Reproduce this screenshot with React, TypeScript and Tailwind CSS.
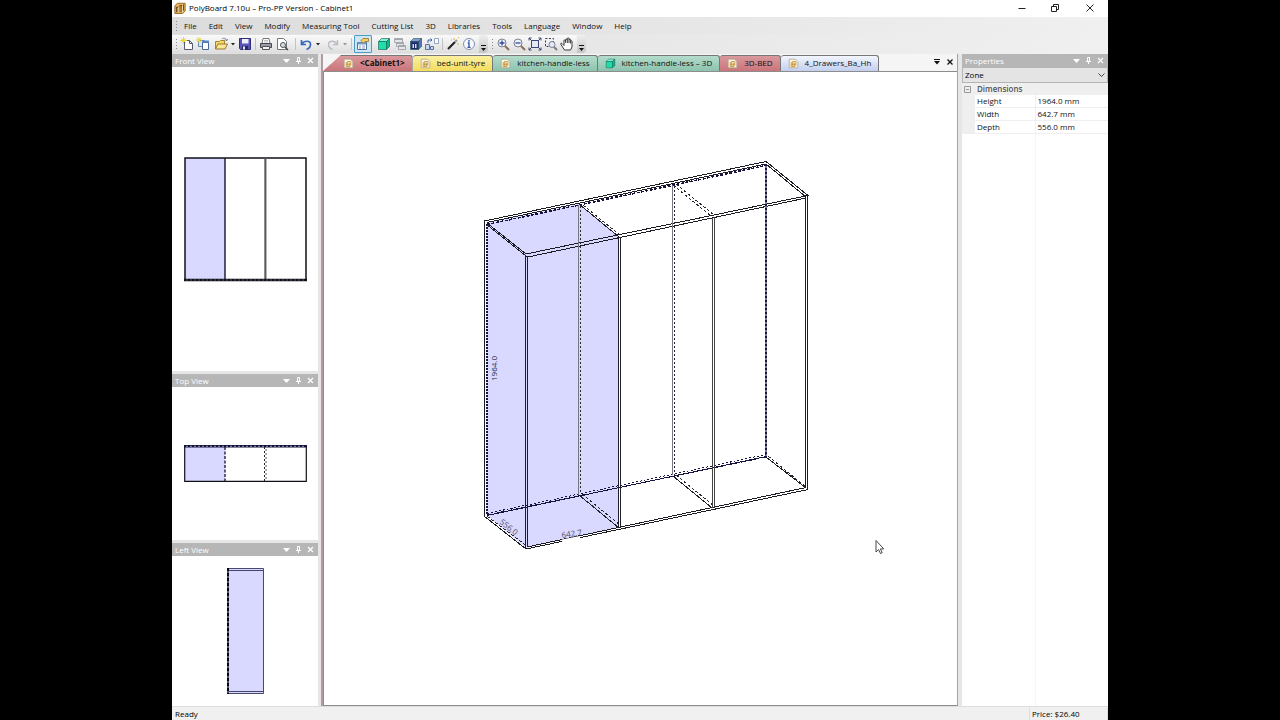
import React, { useState } from 'react'

const menus = ["File", "Edit", "View", "Modify", "Measuring Tool", "Cutting List", "3D", "Libraries", "Tools", "Language", "Window", "Help"];

const tabs = [
    { name: "<Cabinet1>", icon: "doc", style: "bg-linear-to-b from-[#d9999d] to-[#c9747b] pl-5 pr-[7px] font-bold [clip-path:polygon(18px_0,100%_0,100%_100%,0_100%)]" },
    { name: "bed-unit-tyre", icon: "doc", style: "bg-linear-to-b from-[#fbf0a0] to-[#f3dc5c] px-[7px]" },
    { name: "kitchen-handle-less", icon: "doc", style: "bg-linear-to-b from-[#b4dccb] to-[#8cc3ae] px-[7px]" },
    { name: "kitchen-handle-less – 3D", icon: "cube", style: "bg-linear-to-b from-[#b4dccb] to-[#8cc3ae] px-[7px]" },
    { name: "3D-BED", icon: "doc", style: "bg-linear-to-b from-[#d9999d] to-[#c9747b] px-[7px]" },
    { name: "4_Drawers_Ba_Hh", icon: "doc", style: "bg-linear-to-b from-[#f3f6fd] to-[#c3cff0] px-[7px]" },
];

const dimensions = [
    { name: "Height", value: "1964.0 mm" },
    { name: "Width", value: "642.7 mm" },
    { name: "Depth", value: "556.0 mm" },
];

const Svg = ({ size = 14, children }: { size?: number, children: React.ReactNode }) => (
    <svg width={size} height={size} viewBox="0 0 14 14" fill="none" className="shrink-0" aria-hidden="true">{children}</svg>
);

const Cube = ({ face, top, side }: { face: string, top: string, side: string }) => (
    <>
        <path d="M1.5 4.5 4.5 1.5h8l-3 3z" fill={top} stroke="#155" strokeWidth=".6" />
        <path d="m9.5 4.5 3-3v8l-3 3z" fill={side} stroke="#155" strokeWidth=".6" />
        <path d="M1.5 4.5h8v8h-8z" fill={face} stroke="#155" strokeWidth=".6" />
    </>
);

const icons: Record<string, React.ReactNode> = {
    logo: <>
        <path d="M1 4.5 4 1.5h9v9l-3 3H1z" fill="#e8b65a" stroke="#8a5a14" />
        <path d="M3 12V6h2v6M7 12V4h2v8M11 10V3" stroke="#75480c" strokeWidth="1.2" />
        <path d="M5.5 6v6M9.7 4v8" stroke="#fff3cf" />
    </>,
    doc: <>
        <path d="M1.5 1.5h8l3 3v8h-11z" fill="#fbf6e6" stroke="#b0a58a" />
        <path d="m4 6 2-1.500h4v5L8 11H4zM6 5v6M8 6v5M4 8h6" stroke="#c49335" strokeWidth="1.1" />
    </>,
    cube: <Cube face="#1fe0a4" top="#7df5d0" side="#10b585" />,
    fresh: <>
        <path d="M4.500 3.500h5l3 3v6h-8z" fill="#fff" stroke="#555c70" />
        <path d="M9.500 3.500v3h3" stroke="#555c70" />
        <path d="M3.500 0v7M0 3.500h7M1 1l5 5M6 1 1 6" stroke="#e6d84d" />
    </>,
    copies: <>
        <path d="M2.500 3.500h6v6h-6z" fill="#dce8fa" stroke="#6685b5" />
        <path d="M6.500 5.500h6v7h-6z" fill="#fff" stroke="#46669b" />
        <path d="M6 4.500h7" stroke="#5a88cc" strokeWidth="2" />
        <path d="M3 0v6M0 3h6M1 1l4 4M5 1 1 5" stroke="#e6d84d" />
    </>,
    open: <>
        <path d="M1.500 12V4.500h4l1-1h4V7" fill="#f5d76c" stroke="#a6842a" />
        <path d="M1.500 12 4 7h9.500L11 12z" fill="#fbe896" stroke="#98772a" />
        <path d="M8 2c2-1.500 4-1 4.500 1.500m-1.500-1 1.500 1.500L14 2" stroke="#53708e" strokeWidth=".8" />
    </>,
    save: <>
        <path d="M1.500 1.500h11v11h-10l-1-1z" fill="#5754b5" stroke="#302d80" />
        <path d="M4 2h6.500v4.500H4z" fill="#eef0fb" />
        <path d="M4 9h6v3.500H4z" fill="#292868" />
        <path d="M5 9.500h2v3H5z" fill="#e7e7f7" />
    </>,
    print: <>
        <path d="M4 1.500h6l1 5H3z" fill="#fff" stroke="#777" />
        <path d="M1.500 6.500h11v4h-11z" fill="#9a9ca5" stroke="#444752" />
        <path d="M3.500 9.500h7v3h-7z" fill="#f5f5f5" stroke="#555" />
        <path d="M5 3.500h4M5 5h4" stroke="#999" strokeWidth=".6" />
    </>,
    preview: <>
        <path d="M2.500 1.500h6l3 3v8h-9z" fill="#fff" stroke="#777" />
        <circle cx="8" cy="8" r="2.500" fill="#cfe0ec" stroke="#555" />
        <path d="m10 10 3 3" stroke="#444" strokeWidth="1.500" />
    </>,
    undo: <path d="M2.500 3v4.500H7M3 7c2-3.500 8.500-4 8.500.5 0 2.500-1.500 4-4 5" stroke="#3967bd" strokeWidth="1.700" />,
    redo: <path d="M11.500 3v4.500H7M11 7C9 3.500 2.500 3 2.500 7.500c0 2.500 1.500 4 4 5" stroke="#b9bcc2" strokeWidth="1.400" />,
    props: <>
        <path d="M1.500 5.500h9v7h-9z" fill="#fff" stroke="#5374a0" />
        <path d="M2 6.500h8" stroke="#6da1da" strokeWidth="2" />
        <path d="M3 9h2M6 9h3M3 11h2M6 11h3" stroke="#6b84a5" strokeWidth=".8" />
        <path d="M5 3.500 7 1.500h5.500v3H9l-2 2z" fill="#f4cd68" stroke="#9a7326" strokeWidth=".8" />
    </>,
    layers: <>
        <path d="M1.500 1.500h8v4h-8zM3.500 5.500h7v4h-7zM5.500 8.500h7v4h-7z" fill="#e6e7e9" stroke="#a5a8ac" />
        <path d="M1.500 2.500h8M3.500 6.500h7M5.500 9.500h7" stroke="#a5a8ac" />
    </>,
    box: <>
        <Cube face="#30368e" top="#8f9bd0" side="#616dbb" />
        <path d="M3 6.500h5v5H3z" fill="#d7dcf5" stroke="#1d2266" />
        <path d="M5.500 6.500v5" stroke="#1d2266" />
    </>,
    parts: <>
        <path d="M.5 7.500h4v5h-4zM5.500 9.500h3v3h-3z" fill="#cbd9ee" stroke="#5873a3" />
        <path d="M9.500 1.500h4v5h-4z" fill="#fff" stroke="#8fa4c6" />
        <path d="M3 6V3h4M5.500 1.500 7 3 5.500 4.500" stroke="#42639f" />
    </>,
    wand: <>
        <path d="m2 12 7-7" stroke="#222" strokeWidth="2.200" />
        <path d="m9 5 2-2" stroke="#999" strokeWidth="2.200" />
        <path d="M8 1v2M12 6v2M12 1l1-1M5 3h1" stroke="#d8b52d" />
    </>,
    info: <>
        <circle cx="7" cy="7" r="5.500" fill="#f7f9fe" stroke="#8390ad" />
        <path d="M7 3v1.700M5.800 6H7v4M5.500 10.300h3" stroke="#3451a3" strokeWidth="1.300" />
    </>,
    zoomin: <>
        <circle cx="6" cy="6" r="4" fill="#edf2fb" stroke="#7c8294" />
        <path d="M6 3.500v5M3.500 6h5" stroke="#3346a0" strokeWidth="1.300" />
        <path d="m9 9 4 4" stroke="#8b6d55" strokeWidth="2" />
    </>,
    zoomout: <>
        <circle cx="6" cy="6" r="4" fill="#edf2fb" stroke="#7c8294" />
        <path d="M3.500 6h5" stroke="#3346a0" strokeWidth="1.300" />
        <path d="m9 9 4 4" stroke="#8b6d55" strokeWidth="2" />
    </>,
    extents: <>
        <path d="M3.500 3.500h7v7h-7z" fill="#e2e8f5" stroke="#3c4675" />
        <path d="M1 3.500V1h2.500M10.500 1H13v2.500M13 10.500V13h-2.500M3.500 13H1v-2.500M1 1l3 3M13 1l-3 3M1 13l3-3M13 13l-3-3" stroke="#3c4675" />
    </>,
    zoomwin: <>
        <path d="M1.500 1.500h8v8h-8z" stroke="#333d60" strokeDasharray="2 1.500" />
        <circle cx="8" cy="7.500" r="3" fill="#e4ebf7" stroke="#777e8e" />
        <path d="m10 10 3 3" stroke="#777" strokeWidth="1.800" />
    </>,
    hand: <path d="M4 8.500 2 6.500c-1-.8-1.800.3-1 1.200L4.500 13h6l1.500-3V4.500c0-1-1.400-1-1.400 0V2.800c0-1-1.600-1-1.600 0V1.600c0-1-1.700-1-1.700 0v1.200c0-1-1.700-1-1.700 0v3M7.300 2.800V6M9 2.800V6M10.600 4.500v2M4 8.500V3.600c0-1 1.600-1 1.600 0" fill="#fff" stroke="#222" strokeWidth=".9" />,
};

const Tool = ({ name, label }: { name: string, label: string }) => (
    <button type="button" aria-label={label} className="flex h-4 w-4 items-center justify-center">
        <Svg size={14}>{icons[name]}</Svg>
    </button>
);

const Drop = ({ label, color = "#222" }: { label: string, color?: string }) => (
    <button type="button" aria-label={label} className="flex h-4 w-2 items-center justify-center">
        <svg width="4" height="3" viewBox="0 0 4 3"><path d="M0 0h4L2 2.500z" fill={color} /></svg>
    </button>
);

const Sep = () => <span className="mx-[2px] h-3 w-px bg-[#c3c3c3]" />;

const Grip = () => (
    <svg width="6" height="12" viewBox="0 0 6 12" className="shrink-0" aria-hidden="true">
        <path d="M3.500 1v11" stroke="#8c8c8c" strokeDasharray="1 2" />
    </svg>
);

const Overflow = ({ label }: { label: string }) => (
    <button type="button" aria-label={label} className="flex h-[18px] w-[9px] items-end justify-center rounded-r-sm bg-linear-to-b from-[#efefef] to-[#c4c4c4] pb-[2px]">
        <svg width="5" height="6" viewBox="0 0 5 6"><path d="M0 .5h5" stroke="#111" /><path d="M0 3h5L2.500 6z" fill="#111" /></svg>
    </button>
);

const PanelHeader = ({ title }: { title: string }) => (
    <div className="flex h-[13px] shrink-0 items-center bg-[#b6b6b6] px-[2px] text-white">
        <h2 className="flex-1 pl-px">{title}</h2>
        <button type="button" aria-label={title + " menu"} className="flex w-3 justify-center">
            <svg width="7" height="4" viewBox="0 0 7 4"><path d="M0 0h7L3.500 4z" fill="#fff" /></svg>
        </button>
        <button type="button" aria-label={"Pin " + title} className="flex w-3 justify-center">
            <svg width="5" height="7" viewBox="0 0 5 7" fill="none"><path d="M1.500 4V.5h2V4M3.500.5V4M0 4.500h5M2.500 5v2" stroke="#fff" /></svg>
        </button>
        <button type="button" aria-label={"Close " + title} className="flex w-3 justify-center">
            <svg width="7" height="7" viewBox="0 0 7 7"><path d="m1 1 5 5M6 1 1 6" stroke="#fff" strokeWidth="1.200" /></svg>
        </button>
    </div>
);

const FrontView = () => (
    <svg width="123" height="125" viewBox="0 0 123 125" fill="none">
        <path d="M1 1h40v121H1z" fill="#d9d8ff" />
        <path d="M1 124V1h121v123" stroke="#101018" strokeWidth="1.500" />
        <path d="M41 1v122" stroke="#15152c" strokeWidth="1.400" />
        <path d="M81.500 1v122" stroke="#6b6b6b" strokeWidth="2" />
        <path d="M81 1v122" stroke="#333" strokeWidth=".6" />
        <path d="M0 123h123" stroke="#101018" strokeWidth="2.500" />
        <path d="M2 123h119" stroke="#8888a5" strokeWidth=".6" strokeDasharray="2 2" />
    </svg>
);

const TopView = () => (
    <svg width="123" height="37" viewBox="0 0 123 37" fill="none">
        <path d="M1 1h40v35H1z" fill="#d9d8ff" />
        <path d="M.7 1v35.300h121.600V1" stroke="#101018" strokeWidth="1.200" />
        <path d="M0 1.200h123" stroke="#11113a" strokeWidth="2.400" />
        <path d="M2 1.300h120" stroke="#b8b8d8" strokeWidth=".8" strokeDasharray="2 2" />
        <path d="M41 2v34" stroke="#15152c" strokeWidth="1.300" strokeDasharray="3 1.500" />
        <path d="M80.500 2v34" stroke="#222" strokeDasharray="2 2" />
        <path d="M82 4v32" stroke="#555" strokeDasharray="2 2" />
    </svg>
);

const LeftView = () => (
    <svg width="37" height="126" viewBox="0 0 37 126" fill="none">
        <path d="M1 1h35v124H1z" fill="#d9d8ff" />
        <path d="M1 .5h35.500v125H1M1 2.500h35M1 123.500h35" stroke="#34345c" strokeWidth=".9" />
        <path d="M1 0v126" stroke="#55557a" strokeWidth="2" />
        <path d="M1 0v126" stroke="#050510" strokeWidth="2" strokeDasharray="3 2" />
    </svg>
);

const Cabinet = () => (
    <svg viewBox="0 0 633 633" className="h-full w-full" fill="none" role="img" aria-label="Cabinet1">
        <g transform="translate(-324 -72)">
            <path d="m487 223 92-19 40 33v290l-93 21-39-33z" fill="#d9d8ff" />
            <g shapeRendering="crispEdges">
                {/* outer carcass */}
                <g stroke="#1c1c22">
                    <path d="M484.500 221 766 161.500l42 34L526 254l-39-31" />
                    <path d="m487 222.500 279-58.500 40 33M528 257l278-59M486 224l40 32 2 1" />
                    <path d="M525.500 256v293M527.500 257v290M805.500 197v291M807.500 195v295M484.500 221v295" />
                    <path d="m484 516 42 33 282-59.500M527 547l279-59.500" />
                    <path d="m766 457 40 31" />
                </g>
                {/* back panel */}
                <g stroke="#15153f">
                    <path d="m487 224.500 279-59" strokeWidth="1.600" strokeDasharray="3 1.500" />
                    <path d="M486.500 224v291" strokeWidth="2" strokeDasharray="2 1" />
                    <path d="M765.500 164v293" stroke="#777799" strokeWidth="2" />
                    <path d="M765.500 164v293" strokeWidth="2" strokeDasharray="2 2" />
                    <path d="m487 513.500 279-59" strokeDasharray="2 2" />
                    <path d="m487 515.500 279-59" />
                    <path d="m487 515 279-58" strokeDasharray="5 2" />
                </g>
                <g stroke="#25252d" strokeDasharray="3 2">
                    <path d="m487 516 41 31M768 456l39 32M583 205l38 31M582 494l39 32M673 185l39 32M676 184l38 31M676 475l38 31" />
                    <path d="M580.500 206v288M674.500 186v289" strokeDasharray="2 2" />
                </g>
                {/* partitions */}
                <path d="M578.500 205v290M672.500 185v290" stroke="#77777f" />
                <path d="m579 204 40 33M579 495l40 33M673 476l39 32M618.500 237v291M620.500 237v290" stroke="#20202b" />
                <path d="M712.500 218v290M714.500 217v290" stroke="#444" />
            </g>
            <path d="m562 541 18-3.500" stroke="#fff" strokeWidth="3" />
            <g fill="#50506f" className="text-[8px]">
                <text transform="translate(497 381) rotate(-90)" fill="#22223a">1964.0</text>
                <text transform="translate(499 523) rotate(38)">556.0</text>
                <text transform="translate(562 538) rotate(-8)">642.7</text>
            </g>
            <path d="M876 540.500v11.500l2.600-2.400 1.900 3.900 1.700-.8-1.800-3.800h3.400z" fill="#fff" stroke="#333" strokeWidth=".9" />
        </g>
    </svg>
);

const App = () => {

    const [active, setActive] = useState("<Cabinet1>");
    const [type, setType] = useState("Zone");

  return (
    <div className="h-screen bg-black px-[172px] font-['Open_Sans',sans-serif] text-[8px] font-medium leading-[12px] text-[#111]">
      <div className="flex h-full flex-col bg-[#e6e6e6]">
        <header className="flex h-[17px] shrink-0 items-center bg-white pb-px pl-[2px]">
            <Svg size={12}>{icons.logo}</Svg>
            <h1 className="flex-1 pl-[3px] text-black">PolyBoard 7.10u – Pro-PP Version - Cabinet1</h1>
            <button type="button" aria-label="Minimize" className="flex w-[33px] justify-center">
                <svg width="8" height="8" viewBox="0 0 8 8"><path d="M.5 4.500h7" stroke="#222" /></svg>
            </button>
            <button type="button" aria-label="Restore" className="flex w-[33px] justify-center">
                <svg width="8" height="8" viewBox="0 0 8 8" fill="none"><path d="M.5 2.500h5v5h-5zM2.500 2V.5h5v5H6" stroke="#222" /></svg>
            </button>
            <button type="button" aria-label="Close" className="flex w-[37px] justify-center">
                <svg width="8" height="8" viewBox="0 0 8 8"><path d="m.5.5 7 7M7.500.5l-7 7" stroke="#222" /></svg>
            </button>
        </header>

        <nav className="flex h-[17px] shrink-0 items-center bg-linear-to-r from-[#dcdcdc] to-[#f0f0f0] pl-[1px]">
            <Grip />
            <div className="flex gap-3 pl-[5px]">
                {menus.map((menu) => (
                    <button key={menu} type="button">{menu}</button>
                ))}
            </div>
        </nav>

        <div className="flex h-5 shrink-0 items-center bg-linear-to-r from-[#e0e0e0] to-[#f0f0f0]">
            <div className="flex h-[18px] items-center rounded-r-sm bg-linear-to-b from-[#fafafa] to-[#dedede] pl-[1px]">
                <Grip />
                <Tool name="fresh" label="New" />
                <Tool name="copies" label="New from model" />
                <span className="w-[2px]" />
                <Tool name="open" label="Open" />
                <Drop label="Recent files" />
                <Tool name="save" label="Save" />
                <Sep />
                <Tool name="print" label="Print" />
                <Tool name="preview" label="Print preview" />
                <span className="w-[3px]" />
                <Sep />
                <Tool name="undo" label="Undo" />
                <Drop label="Undo list" />
                <span className="w-[3px]" />
                <Tool name="redo" label="Redo" />
                <Drop label="Redo list" color="#999" />
                <Sep />
                <span className="flex rounded-[1px] border border-[#4a9bc7] bg-[#cfe6f3]">
                    <Tool name="props" label="Properties" />
                </span>
                <span className="w-[4px]" />
                <Tool name="cube" label="3D view" />
                <Tool name="layers" label="Layers" />
                <Tool name="box" label="Cabinet" />
                <Tool name="parts" label="Parts" />
                <Sep />
                <Tool name="wand" label="Wizard" />
                <Tool name="info" label="Information" />
                <span className="w-[2px]" />
                <Overflow label="More tools" />
                <span className="w-[1px]" />
                <Grip />
                <Tool name="zoomin" label="Zoom in" />
                <Tool name="zoomout" label="Zoom out" />
                <Tool name="extents" label="Zoom to fit" />
                <Tool name="zoomwin" label="Zoom window" />
                <Tool name="hand" label="Pan" />
                <span className="w-[2px]" />
                <Overflow label="More zoom tools" />
            </div>
        </div>

        <div className="flex min-h-0 flex-1">
            <aside className="flex w-[146px] shrink-0 flex-col">
                <PanelHeader title="Front View" />
                <div className="mb-[3px] flex min-h-0 flex-[304] items-center justify-center bg-white"><FrontView /></div>
                <PanelHeader title="Top View" />
                <div className="mb-[3px] flex min-h-0 flex-[153] items-center justify-center bg-white"><TopView /></div>
                <PanelHeader title="Left View" />
                <div className="flex min-h-0 flex-[150] items-center justify-center bg-white"><LeftView /></div>
            </aside>

            <main className="ml-[3px] mr-1 flex min-w-0 flex-1 flex-col border-l-2 border-r border-[#b39aa0] bg-[#f5f5f5]">
                <div className="flex h-[18px] shrink-0 items-end border-b border-[#8d8d8d]">
                    <div className="flex flex-1 items-end">
                        {tabs.map((tab) => (
                            <button key={tab.name} type="button" aria-pressed={active === tab.name} onClick={() => setActive(tab.name)} className={"flex h-4 items-center gap-[6px] rounded-t-[3px] border-r border-t border-[#777] pb-px whitespace-nowrap " + tab.style}>
                                <Svg size={11}>{icons[tab.icon]}</Svg>
                                {tab.name}
                            </button>
                        ))}
                    </div>
                    <button type="button" aria-label="Tab list" className="flex h-[18px] w-[13px] items-center justify-center">
                        <svg width="6" height="6" viewBox="0 0 6 6"><path d="M0 .5h6" stroke="#111" /><path d="M0 2h6L3 5.500z" fill="#111" /></svg>
                    </button>
                    <button type="button" aria-label="Close tab" className="flex h-[18px] w-[14px] items-center justify-center">
                        <svg width="6" height="6" viewBox="0 0 6 6"><path d="m.5.5 5 5m0-5-5 5" stroke="#111" strokeWidth="1.300" /></svg>
                    </button>
                </div>
                <div className="min-h-0 flex-1 border-b border-l border-[#8d8d8d] bg-white"><Cabinet /></div>
            </main>

            <aside className="flex w-[146px] shrink-0 flex-col bg-white">
                <PanelHeader title="Properties" />
                <div className="relative shrink-0">
                    <select aria-label="Object type" value={type} onChange={({ target }) => setType(target.value)} className="block h-[16px] w-full appearance-none border border-[#b5b5b5] bg-[#e4e4e4] pl-[2px] text-black">
                        <option>Zone</option>
                    </select>
                    <svg width="7" height="4" viewBox="0 0 7 4" fill="none" className="pointer-events-none absolute right-[3px] top-[6px]"><path d="m.5.5 3 3 3-3" stroke="#444" /></svg>
                </div>
                <table className="w-full table-fixed border-collapse text-left">
                    <colgroup>
                        <col className="w-[13px]" />
                        <col className="w-[60px]" />
                        <col />
                    </colgroup>
                    <thead>
                        <tr className="h-[12px] bg-[#efefef] text-[#555]">
                            <th className="p-0 pl-[2px]">
                                <button type="button" aria-label="Collapse Dimensions" className="block">
                                    <svg width="7" height="7" viewBox="0 0 7 7" fill="none"><path d="M.5.5h6v6h-6zM2 3.500h3" stroke="#999" /></svg>
                                </button>
                            </th>
                            <th colSpan={2} className="p-0 pl-[2px] font-semibold">Dimensions</th>
                        </tr>
                    </thead>
                    <tbody>
                        {dimensions.map((row) => (
                            <tr key={row.name} className="h-[12px]">
                                <td className="bg-[#efefef] p-0"></td>
                                <th className="border-b border-[#efefef] p-0 pl-[2px] font-medium">{row.name}</th>
                                <td className="border-b border-l border-[#efefef] p-0 pl-[2px]">{row.value}</td>
                            </tr>
                        ))}
                    </tbody>
                </table>
                <div className="ml-[73px] flex-1 border-l border-[#f5f5f5]"></div>
            </aside>
        </div>

        <footer className="flex h-[14px] shrink-0 items-center border-t border-[#ddd] bg-[#f0f0f0] pl-[3px] text-black">
            <span className="flex-1">Ready</span>
            <span className="w-[79px] border-l border-r border-[#ddd] pl-[2px]">Price: $26.40</span>
        </footer>
      </div>
    </div>
  )
}

export default App
